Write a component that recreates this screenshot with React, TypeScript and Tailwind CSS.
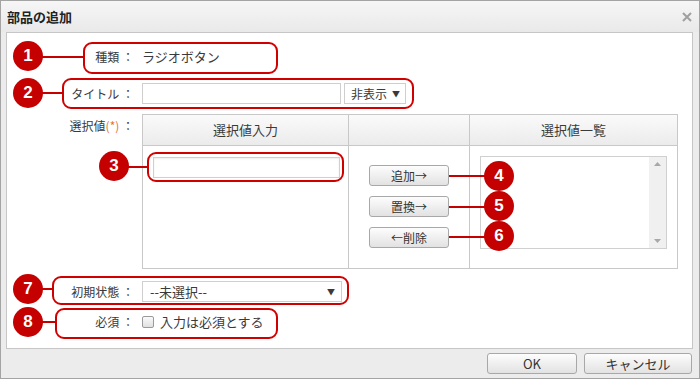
import React from "react";

const font = { fontFamily: '"Noto Sans CJK JP", "Liberation Sans", sans-serif' };

const Badge = ({ n, x, y }: { n: number; x: number; y: number }) => (
  <div
    className="absolute w-[30px] h-[30px] rounded-full bg-[#c40000] text-white flex items-center justify-center text-[17px] font-bold font-['Liberation_Sans',sans-serif]"
    style={{ left: x - 15, top: y - 15 }}
  >
    {n}
  </div>
);

const Frame = ({ x, y, w, h }: { x: number; y: number; w: number; h: number }) => (
  <div
    className="absolute border-2 border-[#d10000] rounded-[9px]"
    style={{ left: x, top: y, width: w, height: h }}
  />
);

const Line = ({ x1, x2, y }: { x1: number; x2: number; y: number }) => (
  <div className="absolute h-[2px] bg-[#c40000]" style={{ left: x1, top: y - 1, width: x2 - x1 }} />
);

const GrayButton = ({ children, w }: { children: React.ReactNode; w: string }) => (
  <button
    className={`${w} h-[21px] border border-[#a8a8a8] rounded-[3px] bg-gradient-to-b from-[#fdfdfd] to-[#e2e2e2] text-[12px] text-[#333] leading-none flex items-center justify-center`}
  >
    {children}
  </button>
);

export default function App() {
  return (
    <div className="relative w-[700px] h-[379px] text-[#3a3a3a]" style={font}>
      <div className="w-full h-full border border-[#a4a4a4] bg-[#ececec] flex flex-col">
        {/* title */}
        <div className="h-[31px] flex items-center justify-between pl-[6px] pr-[6px] bg-gradient-to-b from-[#f6f6f6] to-[#e9e9e9]">
          <span className="text-[13px] font-bold text-[#222]">部品の追加</span>
          <svg width="10" height="10" viewBox="0 0 10 10" className="mr-[1px]">
            <path d="M1 1L9 9M9 1L1 9" stroke="#a0a0a0" strokeWidth="2" />
          </svg>
        </div>

        {/* body */}
        <div className="ml-[5px] w-[687px] h-[317px] border border-[#c6c6c6] bg-white text-[13px]">
          <div className="grid grid-cols-[127px_1fr] gap-x-[8px] pt-[14px]">
            <div className="h-[20px] flex items-center justify-end text-[12px]">種類 ：</div>
            <div className="h-[20px] flex items-center">ラジオボタン</div>

            <div className="mt-[16px] h-[21px] flex items-center justify-end text-[12px]">タイトル ：</div>
            <div className="mt-[16px] flex items-center gap-[3px]">
              <input className="w-[199px] h-[21px] border border-[#cfcfcf] outline-none" />
              <div className="w-[62px] h-[21px] border border-[#cfcfcf] flex items-center justify-between pl-[6px] pr-[5px] text-[12px]">
                <span>非表示</span>
                <span className="text-[8px]">▼</span>
              </div>
            </div>

            <div className="mt-[10px] pt-[3px] flex justify-end text-[12px]">
              <span>
                選択値<span className="text-[#f07030]">(*)</span> ：
              </span>
            </div>
            <div className="mt-[10px] w-[536px] border border-[#c8c8c8] flex">
              <div className="w-[206px] border-r border-[#c8c8c8] flex flex-col">
                <div className="h-[31px] border-b border-[#c8c8c8] bg-gradient-to-b from-[#fafafa] to-[#ebebeb] flex items-center justify-center">
                  選択値入力
                </div>
                <div className="h-[122px] pl-[10px] pt-[11px]">
                  <input className="w-[187px] h-[21px] border border-[#d0d0d0] shadow-[inset_0_1px_2px_rgba(0,0,0,0.08)] outline-none" />
                </div>
              </div>
              <div className="w-[121px] border-r border-[#c8c8c8] flex flex-col">
                <div className="h-[31px] border-b border-[#c8c8c8] bg-gradient-to-b from-[#fafafa] to-[#ebebeb]" />
                <div className="h-[122px] pt-[19px] flex flex-col items-center gap-[10px]">
                  <GrayButton w="w-[80px]">追加→</GrayButton>
                  <GrayButton w="w-[80px]">置換→</GrayButton>
                  <GrayButton w="w-[80px]">←削除</GrayButton>
                </div>
              </div>
              <div className="flex-1 flex flex-col">
                <div className="h-[31px] border-b border-[#c8c8c8] bg-gradient-to-b from-[#fafafa] to-[#ebebeb] flex items-center justify-center">
                  選択値一覧
                </div>
                <div className="h-[122px] pl-[10px] pt-[10px]">
                  <div className="w-[187px] h-[93px] border border-[#d0d0d0] flex justify-end">
                    <div className="w-[17px] h-full bg-[#f0f0f0] flex flex-col items-center justify-between py-[5px]">
                      <svg width="7" height="4" viewBox="0 0 7 4">
                        <path d="M0 4L3.5 0L7 4Z" fill="#a8a8a8" />
                      </svg>
                      <svg width="7" height="4" viewBox="0 0 7 4">
                        <path d="M0 0L3.5 4L7 0Z" fill="#a8a8a8" />
                      </svg>
                    </div>
                  </div>
                </div>
              </div>
            </div>

            <div className="mt-[12px] h-[21px] flex items-center justify-end text-[12px]">初期状態 ：</div>
            <div className="mt-[12px]">
              <div className="w-[200px] h-[21px] border border-[#cfcfcf] flex items-center justify-between pl-[7px] pr-[6px]">
                <span>--未選択--</span>
                <span className="text-[8px]">▼</span>
              </div>
            </div>

            <div className="mt-[10px] h-[20px] flex items-center justify-end text-[12px]">必須 ：</div>
            <div className="mt-[10px] h-[20px] flex items-center gap-[6px]">
              <span className="w-[12px] h-[12px] border border-[#9a9a9a] rounded-[2px] bg-gradient-to-b from-[#fafafa] to-[#e0e0e0]" />
              <span>入力は必須とする</span>
            </div>
          </div>
        </div>

        {/* footer */}
        <div className="flex-1 flex items-center justify-end gap-[7px] pr-[7px]">
          <GrayButton w="w-[90px]">
            <span className="text-[13px]">OK</span>
          </GrayButton>
          <GrayButton w="w-[108px]">
            <span className="text-[13px]">キャンセル</span>
          </GrayButton>
        </div>
      </div>

      {/* annotations */}
      <Frame x={83} y={42} w={195} h={32} />
      <Frame x={62} y={78} w={352} h={31} />
      <Frame x={147} y={152} w={197} h={30} />
      <Frame x={52} y={276} w={297} h={29} />
      <Frame x={55} y={308} w={223} h={31} />
      <Line x1={40} x2={84} y={57} />
      <Line x1={40} x2={63} y={93} />
      <Line x1={125} x2={148} y={167} />
      <Line x1={449} x2={488} y={176} />
      <Line x1={449} x2={488} y={207} />
      <Line x1={449} x2={488} y={237} />
      <Line x1={40} x2={53} y={289} />
      <Line x1={40} x2={56} y={322} />
      <Badge n={1} x={28} y={56} />
      <Badge n={2} x={28} y={93} />
      <Badge n={3} x={114} y={166} />
      <Badge n={4} x={499} y={176} />
      <Badge n={5} x={499} y={206} />
      <Badge n={6} x={499} y={236} />
      <Badge n={7} x={28} y={289} />
      <Badge n={8} x={28} y={322} />
    </div>
  );
}
